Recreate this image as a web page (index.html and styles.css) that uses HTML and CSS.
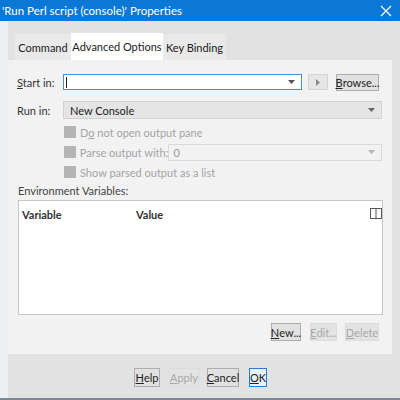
FILE: index.html
```html
<!DOCTYPE html>
<html>
<head>
<meta charset="utf-8">
<link rel="stylesheet" href="styles.css">
</head>
<body>
<div class="window">
  <div class="titlebar">
    <span class="title">'Run Perl script (console)' Properties</span>
    <svg class="close" width="12" height="12" viewBox="0 0 12 12"><path d="M1 1L11 11M11 1L1 11" stroke="#fff" stroke-width="1.2" fill="none"/></svg>
  </div>
  <div class="body">
    <div class="strip"></div>
    <div class="main">
      <div class="tabs">
        <div class="tab t1">Command</div>
        <div class="tab t2 active">Advanced Options</div>
        <div class="tab t3">Key Binding</div>
      </div>
      <div class="panel">
        <div class="row row1">
          <span class="label"><u>S</u>tart in:</span>
          <div class="combo edit">
            <span class="caret"></span>
            <svg class="arrow" width="7" height="4" viewBox="0 0 7 4"><path d="M0 0H7L3.5 4Z" fill="#555"/></svg>
          </div>
          <div class="btn play"><svg width="4" height="7" viewBox="0 0 4 7"><path d="M0 0L4 3.5L0 7Z" fill="#8a8a8a"/></svg></div>
          <div class="btn browse"><u>B</u>rowse...</div>
        </div>
        <div class="row row2">
          <span class="label">Run in:</span>
          <div class="combo ro">
            <span class="ctext">New Console</span>
            <svg class="arrow" width="7" height="4" viewBox="0 0 7 4"><path d="M0 0H7L3.5 4Z" fill="#666"/></svg>
          </div>
        </div>
        <div class="checks">
          <div class="check"><span class="box"></span><span>D<u>o</u> not open output pane</span></div>
          <div class="check"><span class="box"></span><span class="ptext">Parse output with:</span>
            <div class="combo dis"><span class="ctext">0</span><svg class="arrow" width="7" height="4" viewBox="0 0 7 4"><path d="M0 0H7L3.5 4Z" fill="#b5b5b5"/></svg></div>
          </div>
          <div class="check"><span class="box"></span><span>Show parsed output as a list</span></div>
        </div>
        <div class="envlabel">Environment Variables:</div>
        <div class="list">
          <div class="lhead">
            <span class="col1">Variable</span>
            <span class="col2">Value</span>
            <svg class="colicon" width="12" height="11" viewBox="0 0 12 11"><rect x="0.5" y="0.5" width="11" height="10" fill="none" stroke="#555"/><path d="M6 0.5V10.5" stroke="#555"/></svg>
          </div>
        </div>
        <div class="lbtns">
          <div class="btn new"><u>N</u>ew...</div>
          <div class="btn dis edit2"><u>E</u>dit...</div>
          <div class="btn dis del"><u>D</u>elete</div>
        </div>
      </div>
      <div class="footer">
        <div class="btn fb help"><u>H</u>elp</div>
        <div class="btn fb dis apply"><u>A</u>pply</div>
        <div class="btn fb cancel"><u>C</u>ancel</div>
        <div class="btn fb ok"><u>O</u>K</div>
      </div>
    </div>
  </div>
  <div class="bottomline"></div>
</div>
</body>
</html>
```
FILE: styles.css
```css
* { box-sizing: border-box; }
html, body { margin: 0; padding: 0; }
body {
  width: 400px; height: 400px; overflow: hidden;
  font-family: Lato, "Noto Sans", sans-serif;
  font-size: 11px; color: #222; white-space: nowrap;
}
.window { width: 400px; height: 400px; display: flex; flex-direction: column; background: #e2e2e2; }
.titlebar {
  flex-shrink: 0;
  height: 21px; background: #0b78d6; color: #fff;
  display: flex; align-items: center; justify-content: space-between;
  padding: 0 8px 0 2px; font-size: 11.5px;
}
.close { display: block; }
.body { flex: 1; display: flex; min-height: 0; }
.strip { width: 8px; flex-shrink: 0; background: #edf0f3; }
.main { flex: 1; min-width: 0; display: flex; flex-direction: column; padding-top: 12px; }
.tabs { display: flex; height: 27px; margin-left: 7px; align-items: flex-end; }
.tab {
  height: 26px; display: flex; align-items: center; justify-content: center;
  background: #e9e9e9; color: #222; font-size: 11px;
}
.t1 { width: 56px; }
.t2 { width: 92px; }
.t3 { width: 63px; }
.tab.active { background: #fff; height: 27px; }
.panel {
  height: 294px; margin-right: 8px; background: #f2f2f2; flex-shrink: 0;
  padding: 14px 9px 0 9px; display: flex; flex-direction: column;
}
.row { display: flex; align-items: center; }
.row1 { height: 16px; }
.row2 { height: 18px; margin-top: 11px; }
.label { width: 46px; color: #333; }
.combo { position: relative; display: flex; align-items: center; }
.combo.edit { width: 239px; height: 16px; background: #fff; border: 1px solid #4a90d9; }
.caret { width: 1px; height: 11px; background: #222; margin-left: 2px; }
.arrow { position: absolute; right: 6px; top: 50%; margin-top: -2px; }
.btn {
  display: flex; align-items: center; justify-content: center;
  background: #e1e1e1; border: 1px solid #adadad; color: #222;
}
.play { width: 20px; height: 16px; margin-left: 6px; border-color: #d4d4d4; background: #e6e6e6; }
.browse { width: 43px; height: 17px; margin-left: 8px; }
.combo.ro { width: 319px; height: 18px; background: #e5e5e5; border: 1px solid #d2d2d2; }
.combo.ro .ctext { color: #222; }
.ctext { margin-left: 6px; }
.checks { margin-top: 3px; display: flex; flex-direction: column; }
.check { height: 20px; display: flex; align-items: center; padding-left: 47px; color: #a4a4a4; }
.box { width: 12px; height: 12px; background: #b4b4b4; border-radius: 1px; margin-right: 4px; }
.combo.dis {
  width: 216px; height: 17px; margin-left: auto; margin-right: 1px;
  background: #f2f2f2; border: 1px solid #dadada; color: #9a9a9a;
}
.combo.dis .ctext { margin-left: 4px; }
.envlabel { height: 16px; display: flex; align-items: center; margin-left: 1px; color: #444; }
.list {
  margin-top: 2px; margin-left: 1px; width: 365px; height: 115px;
  background: #fff; border: 1px solid #c6c6c6;
}
.lhead { height: 26px; display: flex; align-items: center; position: relative; font-weight: bold; color: #333; }
.col1 { margin-left: 3px; width: 114px; }
.colicon { position: absolute; right: 0; top: 7px; }
.lbtns { margin-top: 8px; display: flex; justify-content: flex-end; padding-right: 4px; }
.lbtns .btn { height: 18px; }
.new { width: 30px; }
.edit2 { width: 27px; margin-left: 9px; }
.del { width: 34px; margin-left: 8px; }
.btn.dis { color: #a8a8a8; border-color: #dcdcdc; background: #e3e3e3; }
.footer { flex: 1; display: flex; justify-content: center; padding-top: 14px; padding-right: 7px; }
.fb { height: 19px; }
.help { width: 26px; }
.apply { width: 30px; margin-left: 9px; }
.cancel { width: 32px; margin-left: 8px; }
.ok { width: 18px; margin-left: 10px; border: 1px solid #2a7bd4; background: #e5f1fb; }
.bottomline { height: 2px; flex-shrink: 0; background: #7c8896; }
```
